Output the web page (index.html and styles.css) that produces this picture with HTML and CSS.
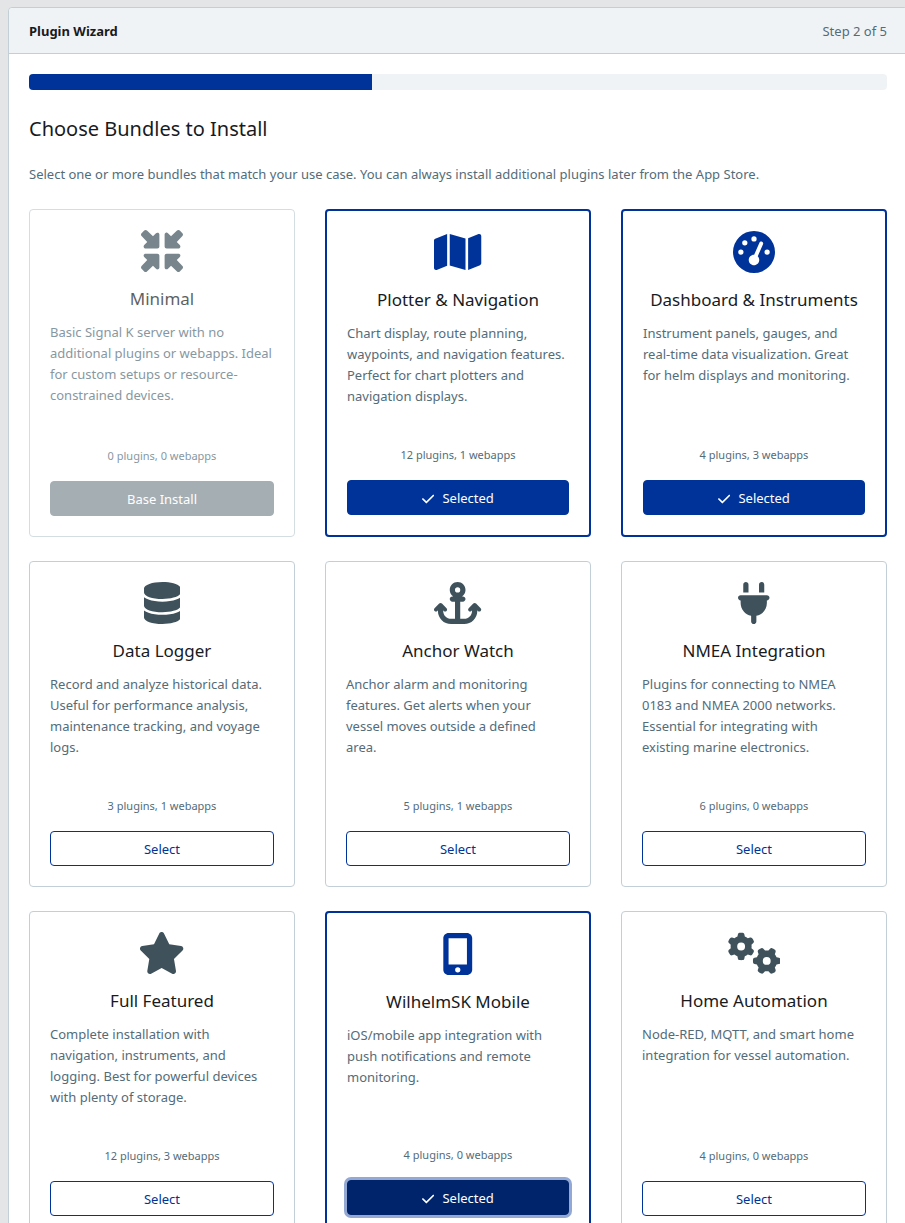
FILE: index.html
```html
<!DOCTYPE html>
<html lang="en">
<head>
    <meta charset="UTF-8">
    <meta name="viewport" content="width=device-width, initial-scale=1.0">
    <title>Plugin Wizard</title>
    <link rel="stylesheet" href="styles.css">
</head>
<body>
    <main class="wizard">
        <header class="wizard-header">
            <strong>Plugin Wizard</strong>
            <span class="step">Step 2 of 5</span>
        </header>

        <div class="wizard-body">
            <div class="progress" role="progressbar" aria-label="Wizard progress" aria-valuenow="40" aria-valuemin="0" aria-valuemax="100">
                <div class="progress-bar" style="width: 40%"></div>
            </div>

            <h1>Choose Bundles to Install</h1>
            <p class="intro">Select one or more bundles that match your use case. You can always install additional plugins later from the App Store.</p>

            <div class="bundles">
                <section class="bundle base">
                    <svg class="icon" viewBox="0 0 512 512" aria-hidden="true">
                        <defs>
                            <path id="arrow" d="M439 7c9.4-9.4 24.6-9.4 33.9 0l32 32c9.4 9.4 9.4 24.6 0 33.9l-69 73 37 37c6.9 6.9 8.9 17.2 5.2 26.2S465.7 224 456 224H312c-13.3 0-24-10.7-24-24V56c0-9.7 5.8-18.5 14.8-22.2s19.3-1.7 26.2 5.2l37 37L439 7z"/>
                        </defs>
                        <use href="#arrow"/>
                        <use href="#arrow" transform="rotate(90 256 256)"/>
                        <use href="#arrow" transform="rotate(180 256 256)"/>
                        <use href="#arrow" transform="rotate(270 256 256)"/>
                    </svg>
                    <h2>Minimal</h2>
                    <p class="description">Basic Signal K server with no additional plugins or webapps. Ideal for custom setups or resource-constrained devices.</p>
                    <p class="counts">0 plugins, 0 webapps</p>
                    <button class="btn btn-base" disabled>Base Install</button>
                </section>

                <section class="bundle selected">
                    <svg class="icon" viewBox="0 0 576 512" aria-hidden="true"><path d="M384 476.1L192 421.2l0-385.3L384 90.8l0 385.3zm32-1.2l0-386.5L543.1 37.5c15.8-6.3 32.9 5.3 32.9 22.3l0 334.8c0 9.8-6 18.6-15.1 22.3L416 474.8zM15.1 95.1L160 37.2l0 386.5L32.9 474.5C17.1 480.8 0 469.2 0 452.2L0 117.4c0-9.8 6-18.6 15.1-22.3z"/></svg>
                    <h2>Plotter &amp; Navigation</h2>
                    <p class="description">Chart display, route planning, waypoints, and navigation features. Perfect for chart plotters and navigation displays.</p>
                    <p class="counts">12 plugins, 1 webapps</p>
                    <button class="btn btn-selected" aria-pressed="true"><svg class="check" viewBox="0 0 448 512" aria-hidden="true"><path d="M438.6 105.4c12.5 12.5 12.5 32.8 0 45.3l-256 256c-12.5 12.5-32.8 12.5-45.3 0l-128-128c-12.5-12.5-12.5-32.8 0-45.3s32.8-12.5 45.3 0L160 338.7 393.4 105.4c12.5-12.5 32.8-12.5 45.3 0z"/></svg>Selected</button>
                </section>

                <section class="bundle selected">
                    <svg class="icon" viewBox="0 0 512 512" aria-hidden="true"><path d="M0 256a256 256 0 1 1 512 0A256 256 0 1 1 0 256zM288 96a32 32 0 1 0 -64 0 32 32 0 1 0 64 0zM256 416c35.3 0 64-28.7 64-64c0-17.4-6.9-33.1-18.1-44.6L366 161.7c5.3-12.1-.2-26.3-12.3-31.6s-26.3 .2-31.6 12.3L257.9 288c-.6 0-1.3 0-1.9 0c-35.3 0-64 28.7-64 64s28.7 64 64 64zM176 144a32 32 0 1 0 -64 0 32 32 0 1 0 64 0zM96 288a32 32 0 1 0 0-64 32 32 0 1 0 0 64zm352-32a32 32 0 1 0 -64 0 32 32 0 1 0 64 0z"/></svg>
                    <h2>Dashboard &amp; Instruments</h2>
                    <p class="description">Instrument panels, gauges, and real-time data visualization. Great for helm displays and monitoring.</p>
                    <p class="counts">4 plugins, 3 webapps</p>
                    <button class="btn btn-selected" aria-pressed="true"><svg class="check" viewBox="0 0 448 512" aria-hidden="true"><path d="M438.6 105.4c12.5 12.5 12.5 32.8 0 45.3l-256 256c-12.5 12.5-32.8 12.5-45.3 0l-128-128c-12.5-12.5-12.5-32.8 0-45.3s32.8-12.5 45.3 0L160 338.7 393.4 105.4c12.5-12.5 32.8-12.5 45.3 0z"/></svg>Selected</button>
                </section>

                <section class="bundle">
                    <svg class="icon" viewBox="0 0 448 512" aria-hidden="true"><path d="M448 80l0 48c0 44.2-100.3 80-224 80S0 172.2 0 128L0 80C0 35.8 100.3 0 224 0S448 35.8 448 80zM393.2 214.7c20.8-7.4 39.9-16.9 54.8-28.6L448 288c0 44.2-100.3 80-224 80S0 332.2 0 288L0 186.1c14.9 11.8 34 21.2 54.8 28.6C99.7 230.7 159.5 240 224 240s124.3-9.3 169.2-25.3zM0 346.1c14.9 11.8 34 21.2 54.8 28.6C99.7 390.7 159.5 400 224 400s124.3-9.3 169.2-25.3c20.8-7.4 39.9-16.9 54.8-28.6l0 85.9c0 44.2-100.3 80-224 80S0 476.2 0 432l0-85.9z"/></svg>
                    <h2>Data Logger</h2>
                    <p class="description">Record and analyze historical data. Useful for performance analysis, maintenance tracking, and voyage logs.</p>
                    <p class="counts">3 plugins, 1 webapps</p>
                    <button class="btn">Select</button>
                </section>

                <section class="bundle">
                    <svg class="icon" viewBox="0 0 576 512" aria-hidden="true"><path d="M320 96a32 32 0 1 1 -64 0 32 32 0 1 1 64 0zm21.1 80C367 158.8 384 129.4 384 96c0-53-43-96-96-96s-96 43-96 96c0 33.4 17 62.8 42.9 80L224 176c-17.7 0-32 14.3-32 32s14.3 32 32 32l32 0 0 208-48 0c-53 0-96-43-96-96l0-6.1 7 7c9.4 9.4 24.6 9.4 33.9 0s9.4-24.6 0-33.9L97 263c-9.4-9.4-24.6-9.4-33.9 0L7 319c-9.4 9.4-9.4 24.6 0 33.9s24.6 9.4 33.9 0l7-7 0 6.1c0 88.4 71.6 160 160 160l80 0 80 0c88.4 0 160-71.6 160-160l0-6.1 7 7c9.4 9.4 24.6 9.4 33.9 0s9.4-24.6 0-33.9l-56-56c-9.4-9.4-24.6-9.4-33.9 0l-56 56c-9.4 9.4-9.4 24.6 0 33.9s24.6 9.4 33.9 0l7-7 0 6.1c0 53-43 96-96 96l-48 0 0-208 32 0c17.7 0 32-14.3 32-32s-14.3-32-32-32l-10.9 0z"/></svg>
                    <h2>Anchor Watch</h2>
                    <p class="description">Anchor alarm and monitoring features. Get alerts when your vessel moves outside a defined area.</p>
                    <p class="counts">5 plugins, 1 webapps</p>
                    <button class="btn">Select</button>
                </section>

                <section class="bundle">
                    <svg class="icon" viewBox="0 0 384 512" aria-hidden="true"><path d="M96 0C78.3 0 64 14.3 64 32l0 96 64 0 0-96c0-17.7-14.3-32-32-32zM288 0c-17.7 0-32 14.3-32 32l0 96 64 0 0-96c0-17.7-14.3-32-32-32zM32 160c-17.7 0-32 14.3-32 32s14.3 32 32 32l0 32c0 77.4 55 142 128 156.8l0 67.2c0 17.7 14.3 32 32 32s32-14.3 32-32l0-67.2C297 398 352 333.4 352 256l0-32c17.7 0 32-14.3 32-32s-14.3-32-32-32L32 160z"/></svg>
                    <h2>NMEA Integration</h2>
                    <p class="description">Plugins for connecting to NMEA 0183 and NMEA 2000 networks. Essential for integrating with existing marine electronics.</p>
                    <p class="counts">6 plugins, 0 webapps</p>
                    <button class="btn">Select</button>
                </section>

                <section class="bundle">
                    <svg class="icon" viewBox="0 0 576 512" aria-hidden="true"><path d="M316.9 18C311.6 7 300.4 0 288.1 0s-23.4 7-28.8 18L195 150.3 51.4 171.5c-12 1.8-22 10.2-25.7 21.7s-.7 24.2 7.9 32.7L137.8 329 113.2 474.7c-2 12 3 24.2 12.9 31.3s23 8 33.8 2.3l128.3-68.5 128.3 68.5c10.8 5.7 23.9 4.9 33.8-2.3s14.9-19.3 12.9-31.3L438.5 329 542.7 225.9c8.6-8.5 11.7-21.2 7.9-32.7s-13.7-19.9-25.7-21.7L381.2 150.3 316.9 18z"/></svg>
                    <h2>Full Featured</h2>
                    <p class="description">Complete installation with navigation, instruments, and logging. Best for powerful devices with plenty of storage.</p>
                    <p class="counts">12 plugins, 3 webapps</p>
                    <button class="btn">Select</button>
                </section>

                <section class="bundle selected">
                    <svg class="icon" viewBox="0 0 384 512" aria-hidden="true"><path d="M16 64C16 28.7 44.7 0 80 0L304 0c35.3 0 64 28.7 64 64l0 384c0 35.3-28.7 64-64 64L80 512c-35.3 0-64-28.7-64-64L16 64zM224 448a32 32 0 1 0 -64 0 32 32 0 1 0 64 0zM304 64L80 64l0 320 224 0 0-320z"/></svg>
                    <h2>WilhelmSK Mobile</h2>
                    <p class="description">iOS/mobile app integration with push notifications and remote monitoring.</p>
                    <p class="counts">4 plugins, 0 webapps</p>
                    <button class="btn btn-selected focused" aria-pressed="true"><svg class="check" viewBox="0 0 448 512" aria-hidden="true"><path d="M438.6 105.4c12.5 12.5 12.5 32.8 0 45.3l-256 256c-12.5 12.5-32.8 12.5-45.3 0l-128-128c-12.5-12.5-12.5-32.8 0-45.3s32.8-12.5 45.3 0L160 338.7 393.4 105.4c12.5-12.5 32.8-12.5 45.3 0z"/></svg>Selected</button>
                </section>

                <section class="bundle">
                    <svg class="icon" viewBox="0 0 640 512" aria-hidden="true">
                        <defs>
                            <path id="gear" d="M308.5 135.3c7.1-6.3 9.9-16.2 6.2-25c-2.3-5.3-4.8-10.5-7.6-15.5L304 89.4c-3-5-6.3-9.9-9.8-14.6c-5.7-7.6-15.7-10.1-24.7-7.1l-28.2 9.3c-10.7-8.8-23-16-36.2-20.9L199 27.1c-1.9-9.3-9.1-16.7-18.5-17.8C173.9 8.4 167.2 8 160.4 8l-.7 0c-6.8 0-13.5 .4-20.1 1.2c-9.4 1.1-16.6 8.6-18.5 17.8L115 56.1c-13.3 5-25.5 12.1-36.2 20.9L50.5 67.8c-9-3-19-.5-24.7 7.1c-3.5 4.7-6.8 9.6-9.9 14.6l-3 5.3c-2.8 5-5.3 10.2-7.6 15.6c-3.7 8.7-.9 18.6 6.2 25l22.2 19.8C32.6 161.9 32 168.9 32 176s.6 14.1 1.7 20.9L11.5 216.7c-7.1 6.3-9.9 16.2-6.2 25c2.3 5.3 4.8 10.5 7.6 15.6l3 5.2c3 5.1 6.3 9.9 9.9 14.6c5.7 7.6 15.7 10.1 24.7 7.1l28.2-9.3c10.7 8.8 23 16 36.2 20.9l6.1 29.1c1.9 9.3 9.1 16.7 18.5 17.8c6.7 .8 13.5 1.2 20.4 1.2s13.7-.4 20.4-1.2c9.4-1.1 16.6-8.6 18.5-17.8l6.1-29.1c13.3-5 25.5-12.1 36.2-20.9l28.2 9.3c9 3 19 .5 24.7-7.1c3.5-4.7 6.8-9.5 9.8-14.6l3.1-5.4c2.8-5 5.3-10.2 7.6-15.5c3.7-8.7 .9-18.6-6.2-25l-22.2-19.8c1.1-6.8 1.7-13.8 1.7-20.9s-.6-14.1-1.7-20.9l22.2-19.8zM112 176a48 48 0 1 1 96 0 48 48 0 1 1 -96 0z"/>
                        </defs>
                        <use href="#gear"/>
                        <use href="#gear" transform="translate(312 176) rotate(90 160 176)"/>
                    </svg>
                    <h2>Home Automation</h2>
                    <p class="description">Node-RED, MQTT, and smart home integration for vessel automation.</p>
                    <p class="counts">4 plugins, 0 webapps</p>
                    <button class="btn">Select</button>
                </section>
            </div>
        </div>
    </main>
</body>
</html>
```

FILE: styles.css
```css
* {
    box-sizing: border-box;
}

body {
    margin: 0;
    padding: 7px 0 24px 8px;
    overflow-x: hidden;
    background-color: #e4e5e6;
    color: #181b1e;
    font-family: "Segoe UI", "Noto Sans", sans-serif;
    font-size: 13px;
    line-height: 21px;
}

h1, h2, p {
    margin: 0;
    font-weight: 400;
}

.wizard {
    margin-right: -3px;
    background: white;
    border: 1px solid #c2cfd6;
    border-radius: 4px;
}

.wizard-header {
    display: flex;
    justify-content: space-between;
    padding: 13px 20px 11px;
    background-color: #f0f3f5;
    border-bottom: 1px solid #c2cfd6;
    border-radius: 4px 4px 0 0;
}

.step {
    color: #536c79;
}

.wizard-body {
    padding: 20px;
}

.progress {
    height: 16px;
    margin-bottom: 26px;
    overflow: hidden;
    background-color: #f0f3f5;
    border-radius: 4px;
}

.progress-bar {
    height: 100%;
    background-color: #003399;
}

h1 {
    margin-bottom: 22px;
    font-size: 20px;
    line-height: 26px;
}

.intro {
    margin-bottom: 24px;
    color: #536c79;
}

.bundles {
    display: grid;
    grid-template-columns: repeat(3, minmax(0, 1fr));
    gap: 24px 30px;
}

.bundle {
    display: flex;
    flex-direction: column;
    align-items: center;
    padding: 20px;
    border: 1px solid #c2cfd6;
    border-radius: 4px;
}

.bundle.selected {
    border: 2px solid #003399;
}

.bundle.base {
    opacity: 0.7;
}

.icon {
    height: 42px;
    margin-bottom: 16px;
    fill: #3f525c;
}

.selected .icon {
    fill: #003399;
}

h2 {
    margin-bottom: 12px;
    font-size: 17px;
    line-height: 22px;
}

.description {
    width: 100%;
    margin-bottom: 39px;
    padding-right: 1px;
    color: #536c79;
}

.counts {
    margin-top: auto;
    margin-bottom: 16px;
    color: #536c79;
    font-size: 11px;
    line-height: 18px;
}

.btn {
    display: flex;
    justify-content: center;
    align-items: center;
    gap: 8px;
    width: 100%;
    padding: 7px 12px 5px;
    background-color: white;
    border: 1px solid #003399;
    border-radius: 4px;
    color: #003399;
    font: inherit;
    cursor: pointer;
}

.btn-selected {
    background-color: #003399;
    color: white;
}

.btn-selected.focused {
    background-color: #00246b;
    border-color: #00246b;
    box-shadow: 0 0 0 3px #93a9d4;
}

.btn-base {
    background-color: #7f8c93;
    border-color: #7f8c93;
    color: white;
    cursor: default;
}

.check {
    height: 14px;
    fill: currentColor;
}
```
